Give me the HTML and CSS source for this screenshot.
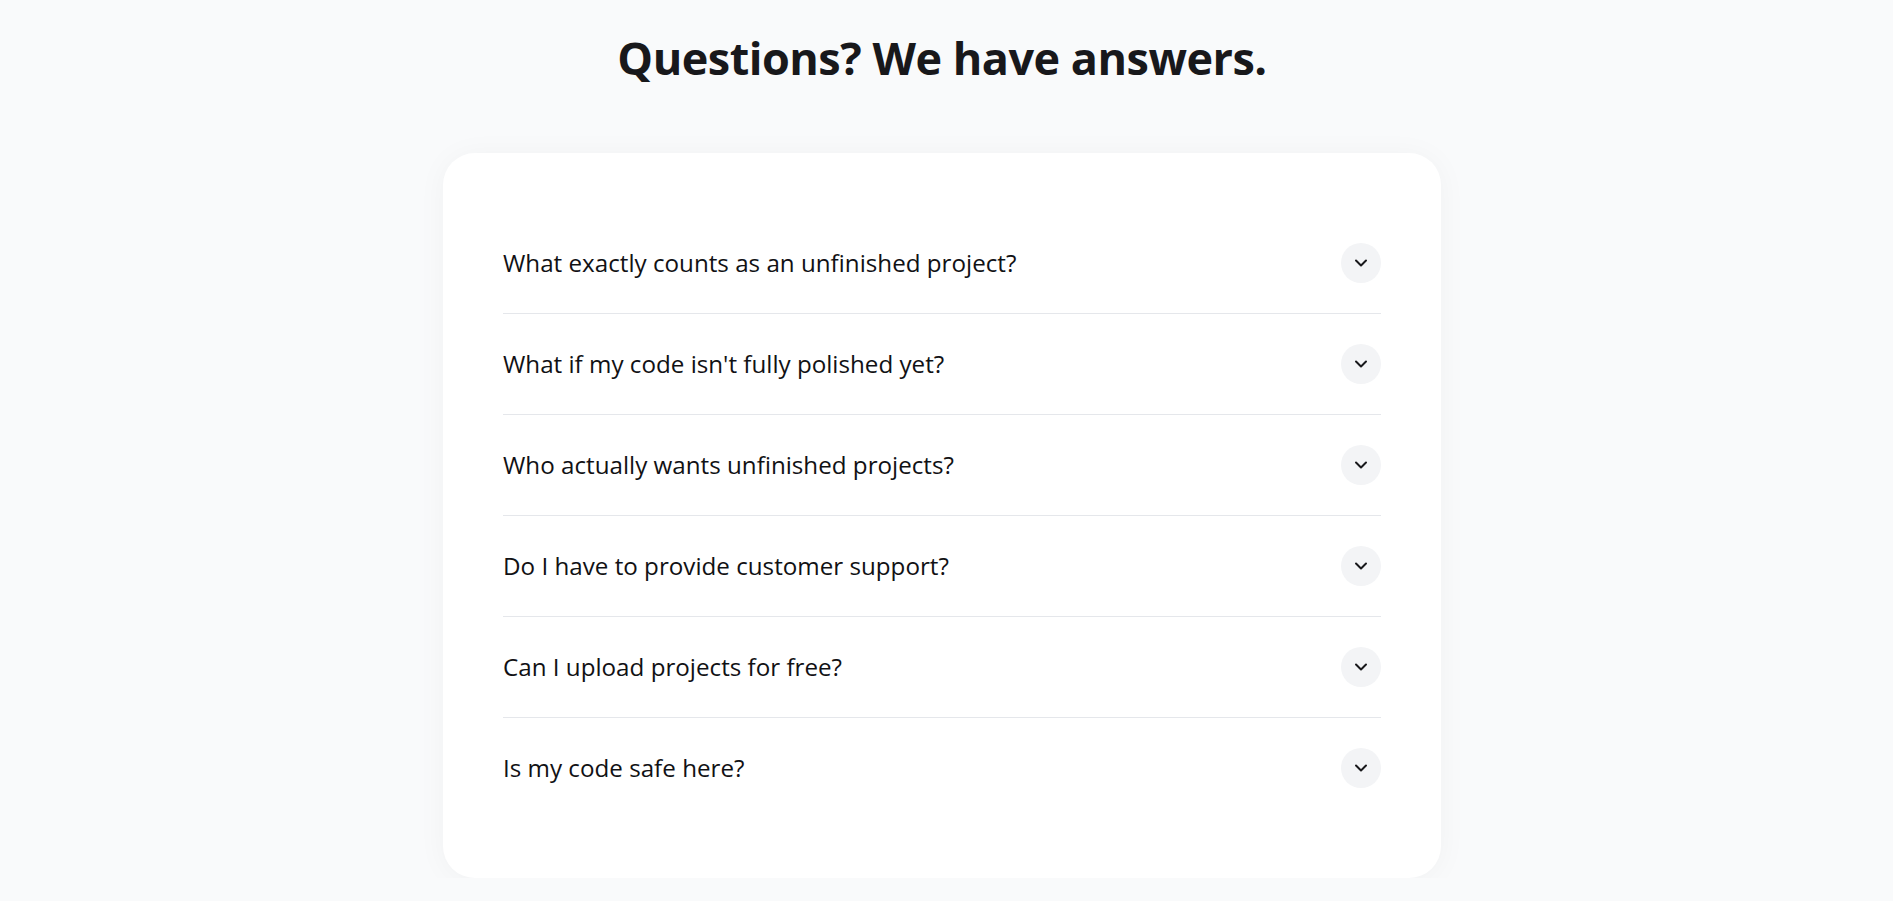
FILE: index.html
```html
<!DOCTYPE html>
<html lang="en">
<head>
<meta charset="utf-8">
<title>FAQ</title>
<link rel="stylesheet" href="styles.css">
</head>
<body>
<main class="page">
  <h1 class="title">Questions? We have answers.</h1>
  <section class="card">
    <div class="item">
      <span class="question">What exactly counts as an unfinished project?</span>
      <span class="toggle"><svg viewBox="0 0 24 24" width="20" height="20" fill="none" stroke="currentColor" stroke-width="2.4" stroke-linecap="round" stroke-linejoin="round"><path d="m6 9 6 6 6-6"/></svg></span>
    </div>
    <div class="item">
      <span class="question">What if my code isn't fully polished yet?</span>
      <span class="toggle"><svg viewBox="0 0 24 24" width="20" height="20" fill="none" stroke="currentColor" stroke-width="2.4" stroke-linecap="round" stroke-linejoin="round"><path d="m6 9 6 6 6-6"/></svg></span>
    </div>
    <div class="item">
      <span class="question">Who actually wants unfinished projects?</span>
      <span class="toggle"><svg viewBox="0 0 24 24" width="20" height="20" fill="none" stroke="currentColor" stroke-width="2.4" stroke-linecap="round" stroke-linejoin="round"><path d="m6 9 6 6 6-6"/></svg></span>
    </div>
    <div class="item">
      <span class="question">Do I have to provide customer support?</span>
      <span class="toggle"><svg viewBox="0 0 24 24" width="20" height="20" fill="none" stroke="currentColor" stroke-width="2.4" stroke-linecap="round" stroke-linejoin="round"><path d="m6 9 6 6 6-6"/></svg></span>
    </div>
    <div class="item">
      <span class="question">Can I upload projects for free?</span>
      <span class="toggle"><svg viewBox="0 0 24 24" width="20" height="20" fill="none" stroke="currentColor" stroke-width="2.4" stroke-linecap="round" stroke-linejoin="round"><path d="m6 9 6 6 6-6"/></svg></span>
    </div>
    <div class="item">
      <span class="question">Is my code safe here?</span>
      <span class="toggle"><svg viewBox="0 0 24 24" width="20" height="20" fill="none" stroke="currentColor" stroke-width="2.4" stroke-linecap="round" stroke-linejoin="round"><path d="m6 9 6 6 6-6"/></svg></span>
    </div>
  </section>
</main>
</body>
</html>
```

FILE: styles.css
```css
html, body {
  margin: 0;
  padding: 0;
  background: #f9fafb;
}

body {
  font-family: "Open Sans", "Noto Sans", sans-serif;
  color: #18181b;
}

.page {
  display: flex;
  flex-direction: column;
  align-items: center;
  padding: 29px 9px 0 0;
}

.title {
  margin: 0 0 66px;
  font-size: 45px;
  line-height: 58px;
  font-weight: 700;
  letter-spacing: -0.5px;
  color: #18181b;
}

.card {
  box-sizing: border-box;
  width: 998px;
  padding: 60px;
  background: #ffffff;
  border-radius: 32px;
  box-shadow: 0 2px 30px rgba(15, 23, 42, 0.04);
}

.item {
  display: flex;
  align-items: center;
  justify-content: space-between;
  padding: 30px 0;
  border-bottom: 1px solid #e5e7eb;
}

.item:last-child {
  border-bottom: none;
}

.question {
  font-size: 24.2px;
  font-weight: 500;
  line-height: 32px;
  color: #111114;
}

.toggle {
  display: flex;
  align-items: center;
  justify-content: center;
  width: 40px;
  height: 40px;
  border-radius: 50%;
  background: #f3f4f6;
  color: #18181b;
}
```
